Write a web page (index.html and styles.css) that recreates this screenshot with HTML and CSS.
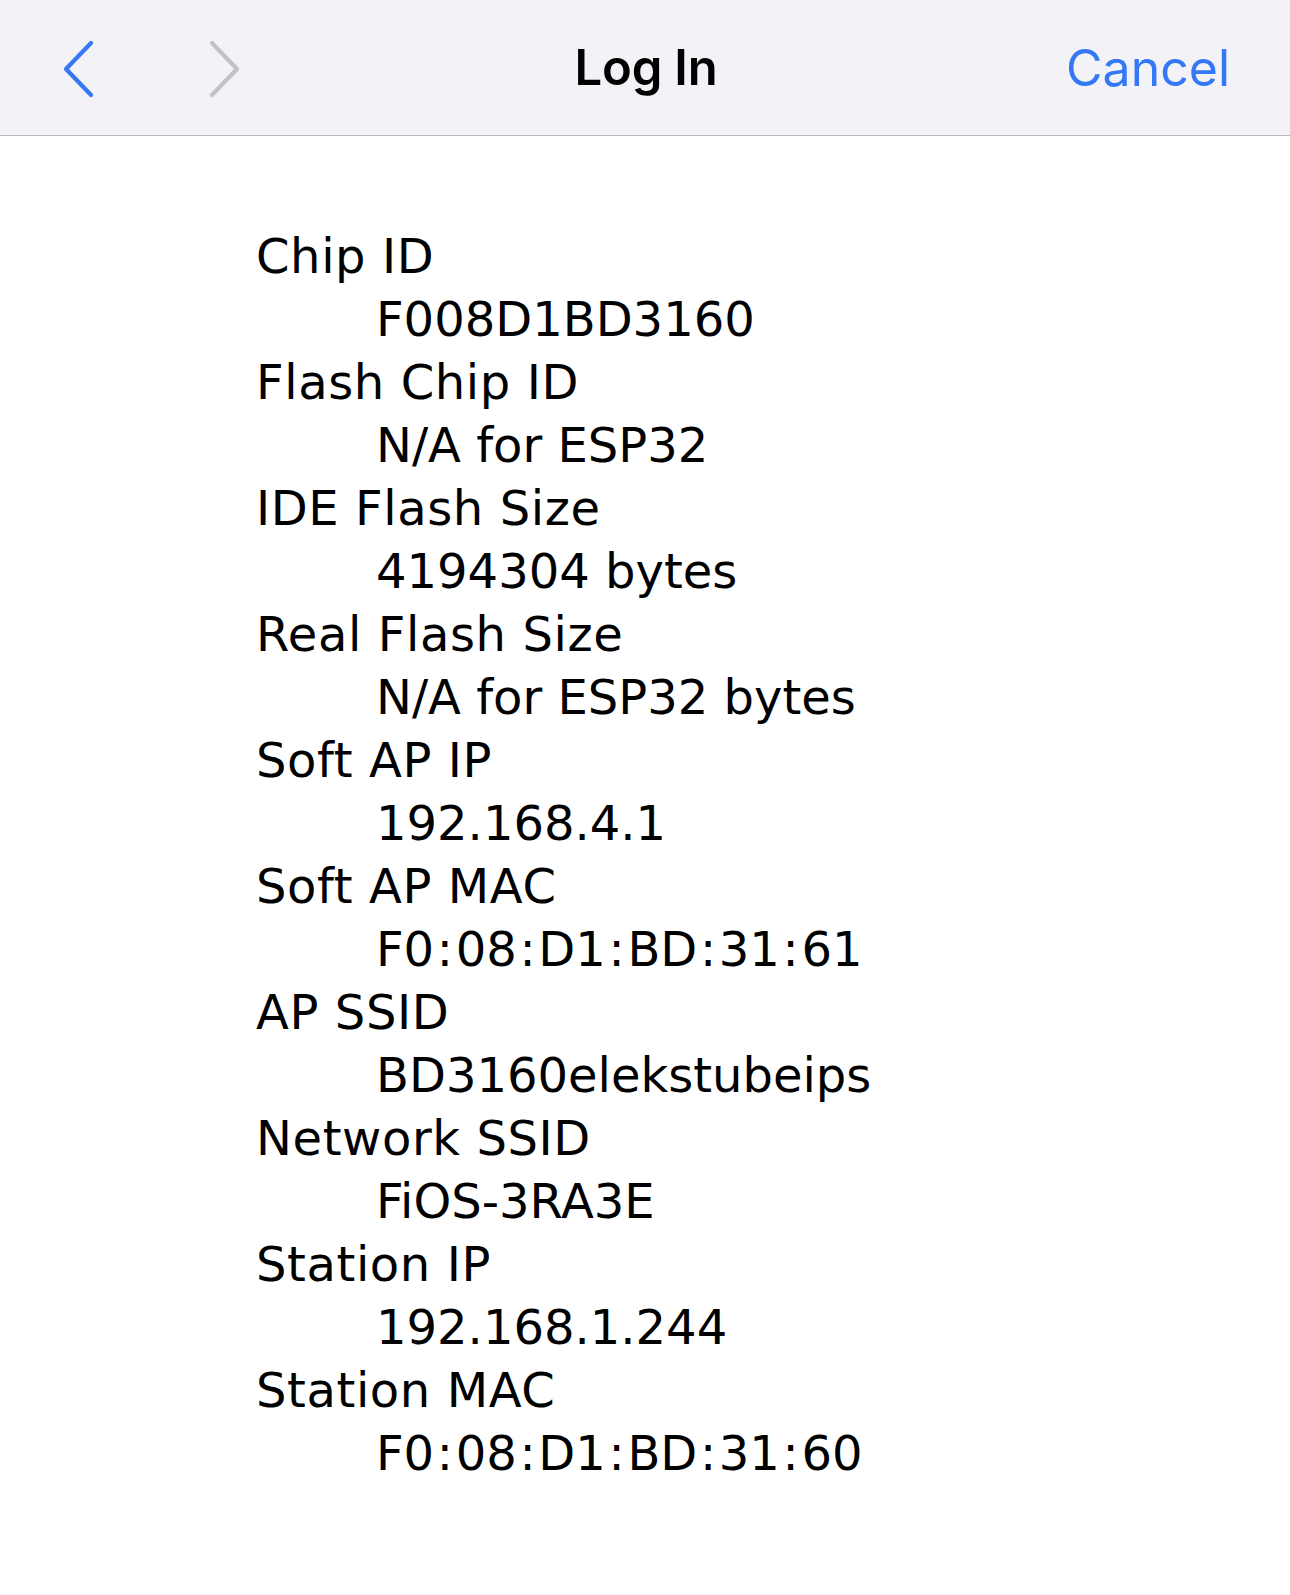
FILE: index.html
```html
<!DOCTYPE html>
<html lang="en">
<head>
<meta charset="utf-8">
<title>Log In</title>
<link rel="stylesheet" href="styles.css">
</head>
<body>
<header class="navbar">
  <div class="nav-left">
    <svg class="chevron" width="34" height="58" viewBox="0 0 34 58" aria-hidden="true">
      <path d="M29 3 L4 29 L29 55" fill="none" stroke="#3478f6" stroke-width="4.2" stroke-linecap="round" stroke-linejoin="round"/>
    </svg>
    <svg class="chevron" width="34" height="58" viewBox="0 0 34 58" aria-hidden="true">
      <path d="M5 3 L30 29 L5 55" fill="none" stroke="#c3c3c5" stroke-width="4.2" stroke-linecap="round" stroke-linejoin="round"/>
    </svg>
  </div>
  <div class="nav-title">Log In</div>
  <div class="nav-right"><span class="nav-cancel">Cancel</span></div>
</header>
<main class="content">
  <dl class="info">
    <dt>Chip ID</dt><dd>F008D1BD3160</dd>
    <dt>Flash Chip ID</dt><dd>N/A for ESP32</dd>
    <dt>IDE Flash Size</dt><dd>4194304 bytes</dd>
    <dt>Real Flash Size</dt><dd>N/A for ESP32 bytes</dd>
    <dt>Soft AP IP</dt><dd>192.168.4.1</dd>
    <dt>Soft AP MAC</dt><dd>F0<span class="sep">:</span>08<span class="sep">:</span>D1<span class="sep">:</span>BD<span class="sep">:</span>31<span class="sep">:</span>61</dd>
    <dt>AP SSID</dt><dd>BD3160elekstubeips</dd>
    <dt>Network SSID</dt><dd>FiOS-3RA3E</dd>
    <dt>Station IP</dt><dd>192.168.1.244</dd>
    <dt>Station MAC</dt><dd>F0<span class="sep">:</span>08<span class="sep">:</span>D1<span class="sep">:</span>BD<span class="sep">:</span>31<span class="sep">:</span>60</dd>
  </dl>
</main>
</body>
</html>
```

FILE: styles.css
```css
html, body {
  margin: 0;
  padding: 0;
  background: #ffffff;
}

.navbar {
  display: grid;
  grid-template-columns: 1fr auto 1fr;
  align-items: center;
  height: 135px;
  padding: 0 60px 0 62px;
  background: #f2f2f7;
  border-bottom: 1px solid #b9b9bd;
  font-family: Inter, "Liberation Sans", sans-serif;
  box-sizing: content-box;
}

.nav-left {
  display: flex;
  align-items: center;
  gap: 111px;
  padding-top: 2px;
}

.chevron {
  display: block;
}

.nav-title {
  font-size: 49px;
  font-weight: 600;
  color: #000000;
  letter-spacing: -0.2px;
}

.nav-right {
  display: flex;
  justify-content: flex-end;
}

.nav-cancel {
  font-size: 50px;
  font-weight: 400;
  color: #3478f6;
  letter-spacing: 0;
}

.content {
  padding: 89px 0 0 256px;
}

.info {
  margin: 0;
  font-family: "DejaVu Sans", Verdana, sans-serif;
  font-size: 48px;
  line-height: 63px;
  color: #000000;
}

.info dt {
  margin: 0;
  letter-spacing: 0.6px;
}

.info dd {
  margin: 0 0 0 120px;
}

.sep {
  margin: 0 2.7px;
}
```
